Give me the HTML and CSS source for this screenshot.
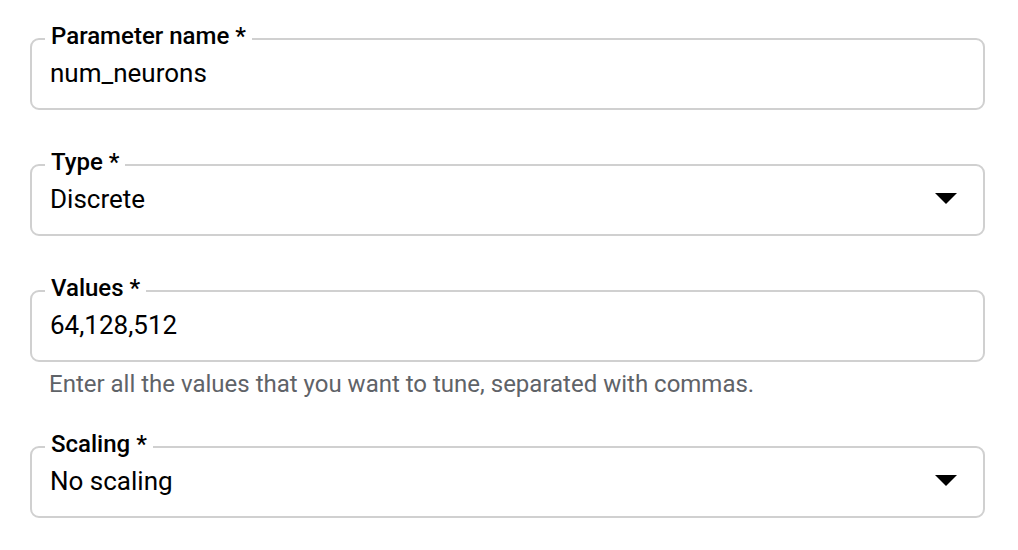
FILE: index.html
```html
<!DOCTYPE html>
<html lang="en">
<head>
<meta charset="utf-8">
<title>Parameter</title>
<link rel="stylesheet" href="styles.css">
</head>
<body>
<form class="form">
  <div class="field">
    <fieldset class="outline">
      <legend class="label">Parameter name *</legend>
      <div class="control"><span class="value">num_neurons</span></div>
    </fieldset>
  </div>
  <div class="field">
    <fieldset class="outline">
      <legend class="label">Type *</legend>
      <div class="control">
        <span class="value">Discrete</span>
        <svg class="arrow" width="22" height="11" viewBox="0 0 22 11"><path d="M0 0H22L11 11Z" fill="#000"/></svg>
      </div>
    </fieldset>
  </div>
  <div class="field">
    <fieldset class="outline">
      <legend class="label">Values *</legend>
      <div class="control"><span class="value">64,128,512</span></div>
    </fieldset>
    <div class="hint">Enter all the values that you want to tune, separated with commas.</div>
  </div>
  <div class="field">
    <fieldset class="outline">
      <legend class="label">Scaling *</legend>
      <div class="control">
        <span class="value">No scaling</span>
        <svg class="arrow" width="22" height="11" viewBox="0 0 22 11"><path d="M0 0H22L11 11Z" fill="#000"/></svg>
      </div>
    </fieldset>
  </div>
</form>
</body>
</html>
```
FILE: styles.css
```css
html, body {
  margin: 0;
  padding: 0;
  background: #fff;
}
body {
  font-family: Roboto, "Liberation Sans", sans-serif;
  color: #202124;
}
.form {
  display: flex;
  flex-direction: column;
  gap: 38px;
  padding: 22px 33px 0 30px;
  width: 955px;
}
.field {
  display: flex;
  flex-direction: column;
}
.outline {
  margin: 0;
  padding: 0 0 0 18px;
  border: 2px solid #d0d0d0;
  border-radius: 9px;
  min-width: 0;
}
.label {
  padding: 0 6px 5px;
  margin-left: -5px;
  font-size: 24px;
  font-weight: 500;
  line-height: 28px;
  color: #000;
}
.control {
  display: flex;
  align-items: center;
  justify-content: space-between;
  height: 30px;
  padding: 3px 26px 20px 0;
}
.value {
  font-size: 26px;
  color: #000;
  line-height: 30px;
}
.arrow {
  display: block;
  margin-top: -2px;
}
.hint {
  margin: 10px 0 -4px;
  padding-left: 19px;
  font-size: 24px;
  line-height: 24px;
  color: #5f6368;
}
```
